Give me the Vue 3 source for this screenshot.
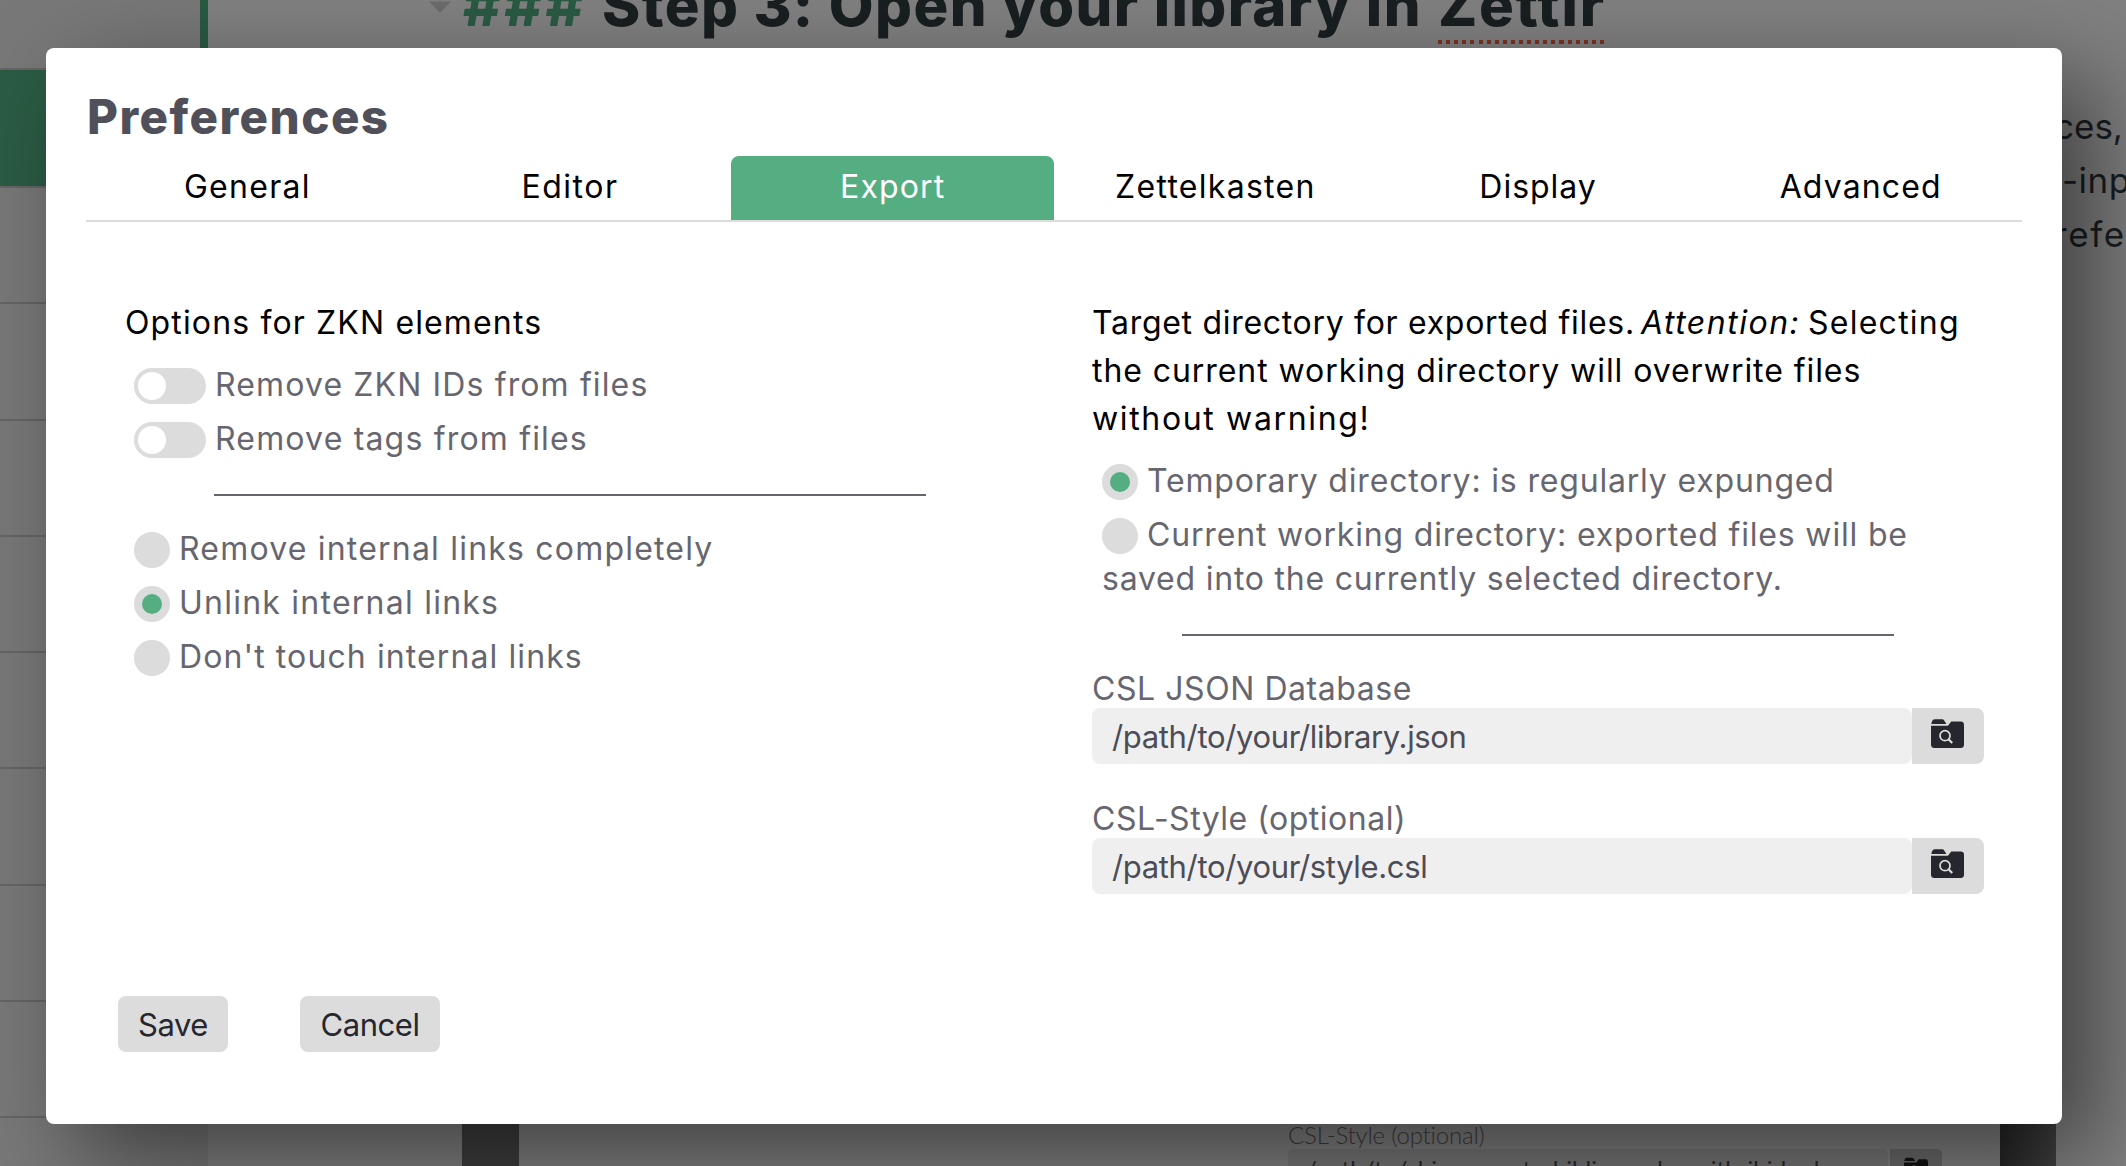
<script setup>
import { ref } from 'vue'

const tabs = [
  { label: 'General', spacing: 1.28 },
  { label: 'Editor', spacing: 1.5 },
  { label: 'Export', spacing: 1.12 },
  { label: 'Zettelkasten', spacing: 1.28 },
  { label: 'Display', spacing: 0.97 },
  { label: 'Advanced', spacing: 1.13 },
]
const activeTab = ref('Export')

const toggles = [
  { label: 'Remove ZKN IDs from files', spacing: 1.13 },
  { label: 'Remove tags from files', spacing: 1.18 },
]
const linkModes = [
  { label: 'Remove internal links completely', spacing: 1.2 },
  { label: 'Unlink internal links', spacing: 1.24 },
  { label: "Don't touch internal links", spacing: 1.1 },
]
const linkMode = ref('Unlink internal links')

const files = [
  { label: 'CSL JSON Database', spacing: 0.56, value: '/path/to/your/library.json' },
  { label: 'CSL-Style (optional)', spacing: 0.5, value: '/path/to/your/style.csl' },
]
const track = (n) => ({ letterSpacing: n + 'px' })
</script>

<template>
  <div class="app">
    <aside class="sidebar">
      <div class="item first"></div>
      <div class="item selected"></div>
      <div v-for="n in 8" :key="n" class="item"></div>
    </aside>
    <div class="resizer"></div>
    <main class="editor">
      <h3 class="heading">
        <svg class="fold" width="22" height="12" viewBox="0 0 22 12"><path d="M0 0.5H22L11 12Z" fill="#6c6c6c" /></svg>
        <span class="hashes">###</span>
        <span class="step">Step 3: Open your library in</span>
        <span class="misspelled">Zettlr</span>
      </h3>
      <div class="paragraph">
        <div class="l1">ces,</div>
        <div class="l2">-inp</div>
        <div class="l3">refe</div>
      </div>
      <div class="figure">
        <div class="bar bar-left"></div>
        <div class="shot">
          <div class="shot-label">CSL-Style (optional)</div>
          <div class="shot-row">
            <div class="shot-input">/path/to/chicago-note-bibliography-with-ibid.csl</div>
            <div class="shot-button">
              <svg width="24" height="22" viewBox="0 0 33 29">
                <path d="M.4 5Q.8.3 4 .3H11.5Q13 .3 15.3 5Z" fill="#131313" />
                <path d="M0 6.8H17L20.2 2.6H29.6Q33 2.6 33 6V25.500Q33 29 29.500 29H3.500Q0 29 0 25.500Z" fill="#131313" />
                <circle cx="14" cy="16.700" r="5" fill="none" stroke="#555" stroke-width="1.700" />
              </svg>
            </div>
          </div>
        </div>
        <div class="bar bar-right"></div>
      </div>
    </main>

    <div class="modal">
      <h1 class="title">Preferences</h1>
      <nav class="tabs">
        <div v-for="t in tabs" :key="t.label" class="tab" :class="{ active: t.label === activeTab }">
          <span :style="track(t.spacing)">{{ t.label }}</span>
        </div>
      </nav>

      <div class="columns">
        <section class="column">
          <p class="lead zkn">Options for ZKN elements</p>
          <div class="group">
            <div v-for="t in toggles" :key="t.label" class="option">
              <span class="toggle"><span class="knob"></span></span>
              <span class="label" :style="track(t.spacing)">{{ t.label }}</span>
            </div>
          </div>
          <hr class="rule" />
          <div class="group after-rule">
            <div v-for="m in linkModes" :key="m.label" class="option">
              <span class="radio" :class="{ on: m.label === linkMode }"></span>
              <span class="label" :style="track(m.spacing)">{{ m.label }}</span>
            </div>
          </div>
        </section>

        <section class="column">
          <p class="lead">
            <span class="t1">Target directory for exported files.</span><em>Attention:</em><span class="t2">Selecting</span><br />
            <span class="t3">the current working directory will overwrite files</span><br />
            <span class="t4">without warning!</span>
          </p>
          <div class="group">
            <div class="option">
              <span class="radio on"></span>
              <span class="label d1">Temporary directory: is regularly expunged</span>
            </div>
            <div class="option">
              <span class="radio"></span>
              <span class="label d2">Current working directory: exported files will be</span>
            </div>
            <div class="wrapped">saved into the currently selected directory.</div>
          </div>
          <hr class="rule second" />
          <div v-for="f in files" :key="f.label" class="field">
            <div class="field-label" :style="track(f.spacing)">{{ f.label }}</div>
            <div class="field-row">
              <div class="input">{{ f.value }}</div>
              <div class="browse">
                <svg width="33" height="29" viewBox="0 0 33 29">
                  <path d="M.4 5Q.8.3 4 .3H11.500Q13 .3 15.300 5Z" fill="#26262f" />
                  <path d="M0 6.8H17L20.200 2.6H29.600Q33 2.6 33 6V25.500Q33 29 29.500 29H3.500Q0 29 0 25.500Z" fill="#26262f" />
                  <circle cx="14" cy="16.700" r="5" fill="none" stroke="#dcdcdc" stroke-width="1.700" />
                  <path d="M17.500 20.200L21.200 24" stroke="#dcdcdc" stroke-width="2.200" />
                </svg>
              </div>
            </div>
          </div>
        </section>
      </div>

      <div class="actions">
        <button class="save">Save</button>
        <button class="cancel">Cancel</button>
      </div>
    </div>
  </div>
</template>

<style>
html,
body {
  margin: 0;
  overflow: hidden;
}
</style>

<style scoped>
.app {
  position: relative;
  display: flex;
  width: 2126px;
  height: 1166px;
  overflow: hidden;
  background: #808080;
  font-family: Inter, "Liberation Sans", sans-serif;
  font-size: 32px;
  box-sizing: border-box;
}
.app * {
  box-sizing: border-box;
}
p,
h1,
h3 {
  margin: 0;
}

/* dimmed window behind the dialog */
.sidebar {
  width: 208px;
  flex: none;
  background: #787878;
}
.item {
  height: 116.25px;
  border-bottom: 2px solid #646464;
}
.item.first {
  height: 70px;
}
.item.selected {
  height: 118px;
  background: #2b5c44;
}
.resizer {
  width: 8px;
  height: 1100px;
  margin-left: -8px;
  flex: none;
  background: #2a5a43;
}
.editor {
  flex: 1;
  min-width: 0;
  display: flex;
  flex-direction: column;
}
.heading {
  display: flex;
  height: 68px;
  flex: none;
  margin-top: -28px;
  padding-left: 221px;
  font-size: 58px;
  line-height: 67px;
  font-weight: 800;
  white-space: nowrap;
  color: #191e21;
}
.fold {
  margin-top: 29px;
  flex: none;
}
.hashes {
  width: 139px;
  margin-left: 12px;
  letter-spacing: 3.2px;
  color: #2a5a43;
}
.step {
  width: 836px;
  letter-spacing: 1.4px;
}
.misspelled {
  position: relative;
  letter-spacing: 1.75px;
}
.misspelled::after {
  content: "";
  position: absolute;
  left: 0;
  top: 68px;
  width: 166px;
  height: 4px;
  background: repeating-linear-gradient(90deg, #7d3324 0 4px, transparent 4px 8.1px);
}
.paragraph {
  margin-top: 58.5px;
  padding-left: 1846px;
  font-size: 35px;
  line-height: 54px;
  white-space: nowrap;
  color: #191e21;
}
.l2 {
  padding-left: 8px;
  letter-spacing: 0.5px;
}
.l3 {
  letter-spacing: 1.6px;
}
.figure {
  display: flex;
  height: 60px;
  margin-top: auto;
  padding-left: 254px;
  flex: none;
}
.bar {
  background: #3e3e3e;
}
.bar-left {
  width: 57px;
}
.bar-right {
  width: 56px;
  background: linear-gradient(90deg, #272727, #404040);
}
.shot {
  width: 1481px;
  padding: 15px 0 0 769px;
  font-family: Lato, sans-serif;
  font-size: 24px;
  overflow: hidden;
}
.shot-label {
  line-height: 28px;
  font-weight: 300;
  letter-spacing: -0.19px;
  color: #3c3c3c;
}
.shot-row {
  display: flex;
}
.shot-input {
  width: 600px;
  height: 40px;
  margin-right: 2px;
  padding-left: 18px;
  border-radius: 5px;
  line-height: 40px;
  letter-spacing: 0.05px;
  white-space: nowrap;
  background: #777;
  color: #2a2a2a;
}
.shot-button {
  width: 52px;
  height: 40px;
  padding: 8px 0 0 14px;
  border-radius: 0 5px 5px 0;
  background: #6a6a6a;
}
.shot-button svg {
  display: block;
}

/* preferences dialog */
.modal {
  position: absolute;
  left: 46px;
  top: 48px;
  width: 2016px;
  height: 1076px;
  display: flex;
  flex-direction: column;
  padding: 41px 40px 72px;
  border-radius: 8px;
  background: #fff;
  box-shadow: 32px 32px 92px rgba(0, 0, 0, 0.5);
}
.title {
  height: 56px;
  padding-left: 1px;
  font-size: 47.5px;
  line-height: 56px;
  font-weight: 800;
  letter-spacing: 1.45px;
  color: #50505a;
}
.tabs {
  display: flex;
  margin-top: 11px;
  border-bottom: 2px solid #dcdcdc;
}
.tab {
  flex: 1;
  height: 64px;
  border-radius: 8px 8px 0 0;
  line-height: 61px;
  text-align: center;
  color: #000;
}
.tab.active {
  background: #54ae82;
  color: #fff;
}
.columns {
  display: flex;
  gap: 76px;
  padding: 77px 0 0 38px;
}
.column {
  width: 892px;
  flex: none;
}
.lead {
  line-height: 48px;
  white-space: nowrap;
  color: #000;
}
.zkn {
  padding-left: 1px;
  letter-spacing: 1.14px;
}
.t1 {
  display: inline-block;
  width: 549px;
  letter-spacing: 0.7px;
}
.lead em {
  display: inline-block;
  width: 167px;
  letter-spacing: 1.5px;
}
.t2 {
  letter-spacing: 1.25px;
}
.t3 {
  letter-spacing: 0.93px;
}
.t4 {
  letter-spacing: 1.65px;
}
.group {
  margin-top: 12px;
  padding-left: 10px;
  color: #67666f;
}
.group.after-rule {
  margin-top: 27px;
}
.option {
  display: flex;
  align-items: center;
  height: 54px;
}
.toggle {
  width: 72px;
  height: 36px;
  padding: 4px;
  border-radius: 18px;
  background: #dcdcdc;
}
.knob {
  display: block;
  width: 28px;
  height: 28px;
  border-radius: 50%;
  background: #fff;
}
.radio {
  display: flex;
  width: 36px;
  height: 36px;
  border-radius: 50%;
  background: #dcdcdc;
}
.radio.on::after {
  content: "";
  width: 20px;
  height: 20px;
  margin: auto;
  border-radius: 50%;
  background: #54ae82;
}
.label {
  margin: 0 0 3px 9px;
  white-space: nowrap;
}
.d1 {
  letter-spacing: 0.82px;
}
.d2 {
  letter-spacing: 0.83px;
}
.wrapped {
  height: 44px;
  margin-top: -7px;
  line-height: 46px;
  letter-spacing: 0.78px;
}
.rule {
  height: 2px;
  margin: 27px 90px 0;
  border: 0;
  background: #67666f;
}
.rule.second {
  margin: 34px 90px 33px;
}
.field + .field {
  margin-top: 35px;
}
.field-label {
  height: 39px;
  line-height: 39px;
  color: #67666f;
}
.field-row {
  display: flex;
}
.input {
  width: 820px;
  height: 56px;
  padding-left: 20px;
  border-radius: 8px;
  font-size: 31px;
  line-height: 57px;
  letter-spacing: -0.35px;
  background: #efefef;
  color: #4c4c56;
}
.browse {
  width: 72px;
  height: 56px;
  padding: 11px 0 0 19px;
  border-radius: 0 8px 8px 0;
  background: #dcdcdc;
}
.browse svg {
  display: block;
}
.actions {
  display: flex;
  gap: 72px;
  margin-top: auto;
  padding-left: 32px;
}
.actions button {
  height: 56px;
  padding: 2px 0 0;
  border: 0;
  border-radius: 8px;
  font: 400 31px/54px Inter, "Liberation Sans", sans-serif;
  letter-spacing: -0.45px;
  background: #dcdcdc;
  color: #26262f;
}
.save {
  width: 110px;
}
.cancel {
  width: 140px;
}
</style>
